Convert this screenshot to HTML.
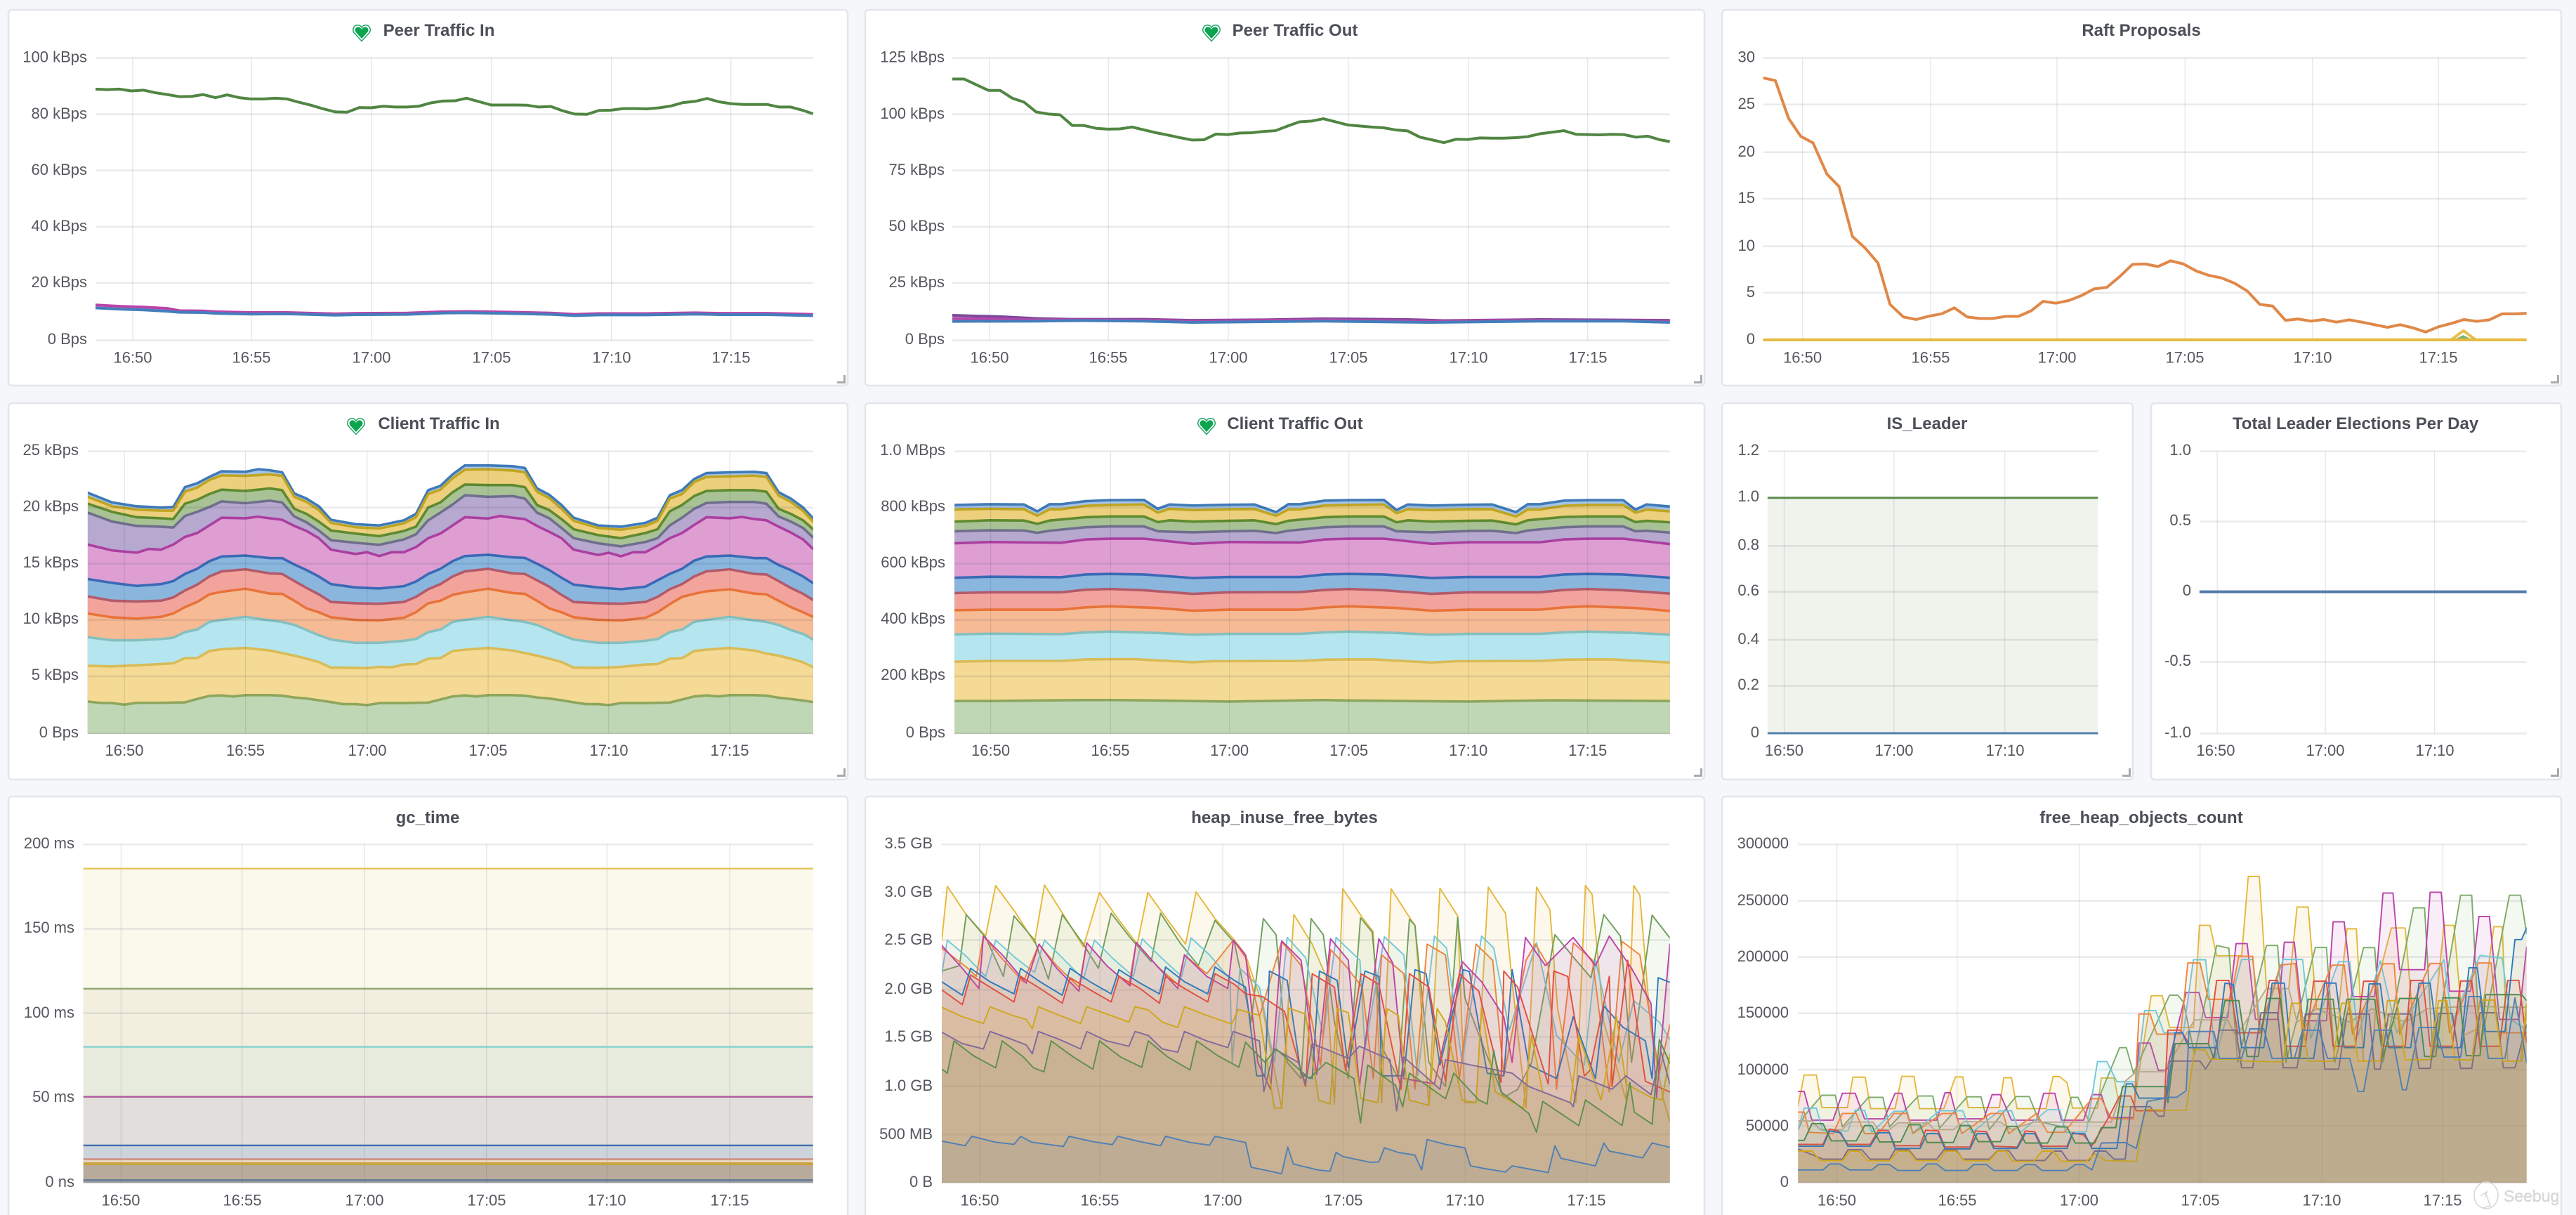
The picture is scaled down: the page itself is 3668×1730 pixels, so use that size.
<!DOCTYPE html>
<html><head><meta charset="utf-8"><title>Dashboard</title>
<style>
html,body{margin:0;padding:0;background:#f6f7fa;width:3668px;height:1730px;overflow:hidden}
svg{display:block;font-family:"Liberation Sans",sans-serif}
svg *{vector-effect:non-scaling-stroke}
.p{fill:#fff;stroke:#e2e6ec;stroke-width:2.5}
.t{font-size:24px;font-weight:700;fill:#4c4f57;text-anchor:middle}
.y text{font-size:22px;fill:#55575e;text-anchor:end}
.x text{font-size:22px;fill:#55575e;text-anchor:middle}
.gh{fill:none;stroke:rgba(40,50,80,.1);stroke-width:2.5}
.gv{fill:none;stroke:rgba(40,50,80,.12);stroke-width:1.3}
.l{fill:none;stroke-width:4;stroke-linejoin:round}
.s polygon{stroke-width:3.6;stroke-linejoin:round}
.h polygon{fill-opacity:.095;stroke-width:1.9;stroke-linejoin:round}
.r{fill:none;stroke:#a9aaad;stroke-width:3}
</style></head><body>
<svg xmlns="http://www.w3.org/2000/svg" width="3668" height="1730" viewBox="0 0 3668 1730">
<defs>
<clipPath id="c4"><rect x="158" y="100" width="1306" height="1206"/></clipPath>
<clipPath id="c5"><rect x="176" y="100" width="1288" height="1206"/></clipPath>
<clipPath id="c9"><rect x="153" y="100" width="1311" height="1348"/></clipPath>
<clipPath id="c10"><rect x="165" y="100" width="1314" height="1348"/></clipPath>
</defs>
<rect width="3668" height="1730" fill="#f6f7fa"/>

<rect class="p" x="12" y="14" width="1195" height="535" rx="5"/>
<rect class="p" x="1232" y="14" width="1195" height="535" rx="5"/>
<rect class="p" x="2452" y="14" width="1195" height="535" rx="5"/>
<rect class="p" x="12" y="574" width="1195" height="536" rx="5"/>
<rect class="p" x="1232" y="574" width="1195" height="536" rx="5"/>
<rect class="p" x="2452" y="574" width="585" height="536" rx="5"/>
<rect class="p" x="3063" y="574" width="584" height="536" rx="5"/>
<rect class="p" x="12" y="1134" width="1195" height="640" rx="5"/>
<rect class="p" x="1232" y="1134" width="1195" height="640" rx="5"/>
<rect class="p" x="2452" y="1134" width="1195" height="640" rx="5"/>

<path class="r" d="M1202.5 534V544.500H1192M2422.500 534V544.500H2412M3642.500 534V544.500H3632M1202.500 1094V1104.500H1192M2422.500 1094V1104.500H2412M3032.500 1094V1104.500H3022M3642.500 1094V1104.500H3632"/>

<!-- P1 -->
<g transform="scale(.7908,.3699)">
<path class="gh" d="M172 223H1464M172 440H1464M172 656H1464M172 873H1464M172 1089H1464M172 1310H1464"/>
<path class="gv" d="M239 223V1310M453 223V1310M669 223V1310M885 223V1310M1101 223V1310M1316 223V1310"/>
<polyline class="l" stroke="#508642" points="172,343 193,345 215,343 237,350 258,347 280,357 301,364 323,372 345,371 366,364 388,376 409,365 431,376 452,381 474,381 496,378 517,381 539,394 560,405 582,419 604,431 625,432 647,414 668,415 690,409 711,412 733,412 754,409 776,396 797,389 819,388 840,378 862,391 884,404 905,404 927,404 949,405 970,412 992,410 1014,427 1035,439 1057,440 1079,425 1100,424 1122,418 1143,418 1165,419 1187,415 1208,408 1230,395 1252,390 1273,379 1295,392 1316,399 1338,402 1359,402 1381,402 1403,412 1424,412 1446,425 1464,438"/>
<polyline class="l" stroke="#ba43a9" points="172,1174 215,1179 258,1182 301,1187 323,1196 366,1197 388,1200 452,1203 517,1203 604,1208 647,1206 733,1205 797,1200 840,1199 905,1201 992,1205 1035,1210 1079,1207 1165,1207 1252,1204 1295,1206 1381,1206 1464,1210"/>
<polyline class="l" stroke="#447ebc" points="172,1185 215,1190 258,1193 301,1198 323,1202 366,1203 388,1206 452,1209 517,1208 604,1213 647,1211 733,1210 797,1205 840,1204 905,1206 992,1210 1035,1215 1079,1212 1165,1212 1252,1209 1295,1211 1381,1211 1464,1215"/>
</g>
<!-- P2 -->
<g transform="translate(1220,0) scale(.7908,.3699)">
<path class="gh" d="M172 223H1464M172 440H1464M172 656H1464M172 873H1464M172 1089H1464M172 1310H1464"/>
<path class="gv" d="M239 223V1310M453 223V1310M669 223V1310M885 223V1310M1101 223V1310M1316 223V1310"/>
<polyline class="l" stroke="#508642" points="172,304 193,304 215,326 237,348 258,348 280,378 301,393 323,431 345,439 366,442 388,483 409,483 431,494 452,497 474,496 496,489 517,500 539,511 560,520 582,530 604,539 625,538 647,516 668,518 690,512 711,511 733,506 754,503 776,485 797,469 819,466 840,457 862,469 884,481 905,485 927,489 949,492 970,500 992,504 1014,528 1035,538 1057,549 1079,536 1100,537 1122,531 1143,532 1165,532 1187,530 1208,526 1230,515 1252,509 1273,503 1295,517 1316,518 1338,519 1359,517 1381,518 1403,528 1424,524 1446,538 1464,545"/>
<polyline class="l" stroke="#7a4a9a" points="172,1214 258,1219 323,1226 388,1229 517,1229 604,1233 733,1231 840,1227 992,1230 1057,1234 1230,1230 1464,1233"/>
<polyline class="l" stroke="#ba43a9" points="172,1226 258,1228 323,1231 517,1232 604,1236 840,1231 1035,1236 1230,1233 1464,1236"/>
<polyline class="l" stroke="#447ebc" points="172,1237 323,1236 409,1234 517,1236 604,1241 840,1236 1035,1241 1230,1236 1381,1236 1464,1241"/>
</g>
<!-- P3 -->
<g transform="translate(2430,0) scale(.7895,.3699)">
<path class="gh" d="M102 223H1479M102 402H1479M102 586H1479M102 765H1479M102 948H1479M102 1127H1479"/>
<path class="gv" d="M173 223V1308M404 223V1308M632 223V1308M863 223V1308M1093 223V1308M1320 223V1308"/>
<polygon points="1343,1312 1385,1312 1365,1290" fill="#7eb26d"/>
<polyline class="l" stroke="#e5bf4f" points="1343,1308 1365,1273 1387,1308"/>
<polyline class="l" stroke="#e08848" points="102,300 124,310 148,456 170,525 192,550 217,670 239,718 263,910 286,955 309,1012 331,1172 355,1220 378,1230 401,1217 424,1208 447,1185 470,1220 493,1226 516,1226 539,1218 562,1218 585,1197 607,1160 630,1167 653,1157 676,1138 699,1112 722,1106 745,1065 768,1018 791,1016 814,1026 837,1004 860,1016 883,1043 906,1060 929,1070 952,1090 975,1120 998,1172 1021,1178 1044,1233 1067,1228 1090,1236 1113,1230 1136,1240 1159,1231 1182,1240 1205,1250 1228,1260 1251,1250 1274,1262 1297,1278 1320,1258 1343,1245 1366,1230 1389,1237 1412,1231 1435,1208 1458,1208 1479,1206"/>
<path class="l" stroke="#e5b83f" d="M102 1308H1479"/>
</g>
<!-- P4 -->
<g transform="translate(0,570) scale(.7908,.3635)">
<g clip-path="url(#c4)" class="s">
<polygon fill="#a5c4e6" stroke="#3f7ab8" points="158,362 202,400 246,415 290,420 312,418 333,340 355,325 377,300 399,278 442,280 465,270 486,274 508,282 530,365 552,385 574,415 596,468 640,485 683,490 727,470 749,445 771,352 793,335 815,290 837,255 879,255 923,258 945,265 967,345 989,370 1011,410 1033,460 1077,490 1118,495 1162,480 1184,460 1206,372 1228,352 1250,308 1272,285 1314,282 1358,280 1380,285 1402,360 1424,385 1446,420 1464,462 1500,462 1500,1600 100,1600 100,362"/>
<polygon fill="#ecd07e" stroke="#bfa520" points="158,378 202,415 246,428 290,432 312,432 333,358 355,342 377,312 399,294 442,296 486,290 508,296 530,378 552,398 574,430 596,480 640,497 683,502 727,482 749,458 771,367 793,350 815,305 837,272 879,270 923,275 945,282 967,358 989,383 1011,425 1033,472 1077,500 1118,507 1162,492 1184,472 1206,385 1228,367 1250,320 1272,300 1314,298 1358,295 1380,300 1402,373 1424,398 1446,433 1464,475 1500,475 1500,1600 100,1600 100,378"/>
<polygon fill="#a8c296" stroke="#5f8a2e" points="158,405 202,437 246,458 290,462 312,465 333,405 355,390 377,367 399,350 442,355 486,345 508,352 530,425 552,445 574,475 596,510 640,522 683,532 727,512 749,495 771,420 793,400 815,360 837,330 879,332 923,332 945,340 967,410 989,430 1011,465 1033,505 1077,528 1118,540 1162,520 1184,505 1206,435 1228,410 1250,375 1272,355 1314,352 1358,352 1380,358 1402,425 1424,445 1446,470 1464,505 1500,505 1500,1600 100,1600 100,405"/>
<polygon fill="#b7a8cf" stroke="#6f6f8c" points="158,440 202,475 246,492 290,495 312,498 333,453 355,437 377,418 399,396 442,403 486,393 508,400 530,455 552,478 574,510 596,548 640,558 683,566 727,545 749,525 771,470 793,440 815,408 837,372 879,378 923,375 945,385 967,440 989,462 1011,500 1033,540 1077,560 1118,572 1162,555 1184,540 1206,490 1228,460 1250,425 1272,402 1314,398 1358,398 1380,405 1402,455 1424,475 1446,500 1464,537 1500,537 1500,1600 100,1600 100,440"/>
<polygon fill="#de9ed2" stroke="#ab3fa0" points="158,565 202,588 246,597 268,582 290,585 312,565 333,535 355,520 377,490 399,460 442,462 464,456 486,462 508,468 530,492 552,512 574,540 596,585 640,602 661,595 683,610 705,595 727,595 749,575 771,540 793,522 815,490 837,458 879,463 901,453 923,460 945,465 967,492 989,515 1011,540 1033,585 1077,606 1096,597 1118,611 1140,595 1162,595 1184,570 1206,540 1228,520 1250,488 1272,458 1314,462 1336,457 1358,465 1380,470 1402,495 1424,518 1446,545 1464,582 1500,582 1500,1600 100,1600 100,565"/>
<polygon fill="#8ab6de" stroke="#3a6ab5" points="158,700 202,715 246,727 290,720 312,708 333,680 355,660 377,630 399,612 442,608 486,618 508,618 530,643 552,665 574,690 596,720 640,733 683,737 727,728 749,710 771,680 793,660 815,630 837,610 879,605 923,615 945,617 967,640 989,665 1011,695 1033,722 1077,733 1118,740 1162,730 1184,705 1206,680 1228,660 1250,628 1272,612 1314,608 1358,618 1380,618 1402,645 1424,665 1446,690 1464,716 1500,716 1500,1600 100,1600 100,700"/>
<polygon fill="#f2a49c" stroke="#b35a6a" points="158,768 202,785 246,788 290,785 312,772 333,745 355,722 377,690 399,670 442,662 486,678 508,680 530,708 552,735 574,760 596,790 640,795 683,797 727,790 749,770 771,740 793,720 815,690 837,670 879,660 923,678 945,680 967,705 989,730 1011,762 1033,790 1077,795 1118,797 1162,790 1184,770 1206,740 1228,720 1250,690 1272,670 1314,662 1358,680 1380,682 1402,708 1424,735 1446,758 1464,782 1500,782 1500,1600 100,1600 100,768"/>
<polygon fill="#f6ba94" stroke="#e8733a" points="158,835 202,850 246,855 290,848 312,835 333,810 355,790 377,760 399,750 442,738 486,757 508,758 530,785 552,815 574,830 596,850 640,860 683,862 727,852 749,830 771,795 793,785 815,762 837,752 879,738 923,755 945,758 967,785 989,815 1011,830 1033,850 1077,860 1118,862 1162,852 1184,830 1206,798 1228,770 1250,758 1272,748 1314,740 1358,757 1380,760 1402,785 1424,810 1446,830 1464,848 1500,848 1500,1600 100,1600 100,835"/>
<polygon fill="#b5e6ef" stroke="#85c0bf" points="158,928 202,940 246,940 290,935 312,930 333,908 355,898 377,868 399,860 442,848 486,862 508,868 530,880 552,900 574,920 596,937 640,950 683,950 727,942 749,935 771,908 793,898 815,868 837,860 879,848 923,862 945,868 967,880 989,900 1011,920 1033,937 1077,950 1118,950 1162,942 1184,935 1206,908 1228,898 1250,868 1272,860 1314,848 1358,862 1380,868 1402,880 1424,900 1446,915 1464,937 1500,937 1500,1600 100,1600 100,928"/>
<polygon fill="#f5da95" stroke="#d9bb58" points="158,1040 202,1042 246,1038 290,1033 312,1030 333,1010 355,1010 377,982 399,975 442,970 486,980 508,990 530,1000 552,1012 574,1025 596,1047 640,1048 661,1049 683,1044 705,1046 727,1035 749,1033 771,1012 793,1010 815,982 837,977 879,970 923,980 945,990 967,1000 989,1012 1011,1025 1033,1047 1077,1048 1118,1044 1162,1035 1184,1033 1206,1012 1228,1010 1250,982 1272,977 1314,970 1358,980 1380,992 1402,1000 1424,1012 1446,1026 1464,1045 1500,1045 1500,1600 100,1600 100,1040"/>
<polygon fill="#c0d7b5" stroke="#8ea65c" points="158,1180 180,1185 202,1186 224,1192 246,1185 290,1185 333,1183 355,1170 377,1158 399,1156 420,1160 442,1155 486,1155 508,1157 530,1164 552,1168 574,1175 596,1182 618,1190 640,1190 661,1194 683,1186 727,1186 771,1184 793,1172 815,1160 837,1156 858,1160 879,1155 923,1155 945,1157 967,1164 989,1168 1011,1175 1033,1183 1055,1190 1077,1190 1096,1194 1118,1186 1162,1186 1206,1184 1228,1172 1250,1160 1272,1156 1294,1160 1314,1155 1358,1155 1380,1157 1402,1165 1424,1170 1446,1176 1464,1182 1500,1182 1500,1600 100,1600 100,1180"/>
</g>
<path class="gh" d="M158 200H1464M158 420H1464M158 640H1464M158 860H1464M158 1081H1464M158 1305H1464"/>
<path class="gv" d="M224 200V1305M442 200V1305M661 200V1305M879 200V1305M1096 200V1305M1314 200V1305"/>
</g>
<!-- P5 -->
<g transform="translate(1220,570) scale(.7908,.3635)">
<g clip-path="url(#c5)" class="s">
<polygon fill="#a5c4e6" stroke="#3f7ab8" points="176,410 241,407 301,408 325,435 347,407 368,407 412,395 456,391 517,390 542,425 563,408 605,412 671,409 716,408 755,438 777,407 798,407 842,393 886,391 949,390 972,430 992,408 1035,412 1101,409 1144,408 1187,438 1208,407 1230,407 1273,393 1316,391 1380,391 1402,428 1422,408 1464,416 1500,416 1500,1600 100,1600 100,410"/>
<polygon fill="#ecd07e" stroke="#bfa520" points="176,428 241,425 301,427 325,452 347,427 368,427 412,413 456,410 517,408 542,440 563,425 605,430 671,427 716,426 755,452 777,428 798,427 842,412 886,410 949,408 972,442 992,427 1035,430 1101,427 1144,427 1187,455 1208,428 1230,428 1273,413 1316,410 1380,410 1402,440 1422,428 1464,435 1500,435 1500,1600 100,1600 100,428"/>
<polygon fill="#a8c296" stroke="#5f8a2e" points="176,475 241,470 301,471 325,484 347,471 412,458 456,455 517,455 542,477 563,470 605,475 671,472 716,470 755,485 777,472 842,458 886,455 949,455 972,478 992,470 1035,475 1101,472 1144,471 1187,486 1208,470 1273,457 1316,455 1380,455 1402,477 1422,472 1464,478 1500,478 1500,1600 100,1600 100,475"/>
<polygon fill="#b7a8cf" stroke="#6f6f8c" points="176,513 241,509 301,510 325,519 347,511 412,497 456,494 517,494 542,513 605,517 671,513 716,511 755,520 777,511 842,497 886,494 949,494 972,513 1035,517 1101,512 1144,511 1187,520 1208,510 1273,497 1316,494 1380,494 1402,513 1422,511 1464,518 1500,518 1500,1600 100,1600 100,513"/>
<polygon fill="#de9ed2" stroke="#ab3fa0" points="176,560 241,555 368,558 412,545 456,542 517,542 605,562 671,555 798,557 842,545 886,542 949,542 1035,562 1101,556 1230,556 1273,545 1316,542 1380,542 1464,563 1500,563 1500,1600 100,1600 100,560"/>
<polygon fill="#8ab6de" stroke="#3a6ab5" points="176,695 241,691 368,693 412,682 456,680 517,682 605,696 671,692 798,692 842,682 886,680 949,682 1035,696 1101,692 1230,692 1273,682 1316,680 1380,682 1464,695 1500,695 1500,1600 100,1600 100,695"/>
<polygon fill="#f2a49c" stroke="#b35a6a" points="176,755 241,752 368,752 412,742 456,739 517,744 605,758 671,752 798,751 842,743 886,739 949,744 1035,758 1101,752 1230,752 1273,743 1316,739 1380,744 1464,757 1500,757 1500,1600 100,1600 100,755"/>
<polygon fill="#f6ba94" stroke="#e8733a" points="176,822 241,820 368,820 412,811 456,807 540,813 605,824 671,820 798,820 842,811 886,807 970,813 1035,824 1101,820 1230,820 1273,811 1316,807 1400,813 1464,825 1500,825 1500,1600 100,1600 100,822"/>
<polygon fill="#b5e6ef" stroke="#85c0bf" points="176,917 241,914 368,916 412,909 456,906 540,911 605,918 671,915 798,915 842,909 886,906 970,911 1035,918 1101,915 1230,915 1273,909 1316,906 1400,911 1464,918 1500,918 1500,1600 100,1600 100,917"/>
<polygon fill="#f5da95" stroke="#d9bb58" points="176,1024 241,1021 368,1021 412,1015 456,1014 500,1014 605,1026 640,1022 800,1021 842,1016 886,1015 930,1015 1035,1027 1080,1022 1230,1021 1273,1016 1316,1015 1360,1015 1464,1027 1500,1027 1500,1600 100,1600 100,1024"/>
<polygon fill="#c0d7b5" stroke="#8ea65c" points="176,1178 241,1178 412,1174 456,1174 540,1176 671,1180 842,1174 886,1176 1101,1180 1250,1175 1300,1176 1464,1178 1500,1178 1500,1600 100,1600 100,1178"/>
</g>
<path class="gh" d="M176 200H1464M176 420H1464M176 640H1464M176 860H1464M176 1081H1464M176 1305H1464"/>
<path class="gv" d="M241 200V1305M457 200V1305M671 200V1305M886 200V1305M1101 200V1305M1316 200V1305"/>
</g>
<!-- P6 -->
<g transform="translate(2430,570) scale(.7895,.3635)">
<rect x="110" y="382" width="596" height="923" fill="#eff3ec"/>
<path class="gh" d="M110 200H706M110 570H706M110 750H706M110 938H706M110 1119H706"/>
<path class="gv" d="M140 200V1305M338 200V1305M538 200V1305"/>
<path class="l" style="stroke-width:3" stroke="#5b8a4a" d="M110 382H706"/>
<path class="l" style="stroke-width:3" stroke="#5380ac" d="M110 1304H706"/>
</g>
<!-- P7 -->
<g transform="translate(2430,570) scale(.7895,.3635)">
<path class="gh" d="M889 200H1479M889 475H1479M889 1025H1479M889 1305H1479"/>
<path class="gv" d="M921 200V1305M1116 200V1305M1313 200V1305"/>
<path class="l" stroke="#4f7ba8" d="M889 750H1479"/>
</g>
<!-- P8 -->
<g transform="translate(0,1130) scale(.7908,.3827)">
<rect x="150" y="279" width="1314" height="447" fill="#fbf8ec"/>
<rect x="150" y="726" width="1314" height="216" fill="#f2efdf"/>
<rect x="150" y="942" width="1314" height="186" fill="#e6ebde"/>
<rect x="150" y="1128" width="1314" height="181" fill="#e1dedb"/>
<rect x="150" y="1309" width="1314" height="51" fill="#cdd3db"/>
<rect x="150" y="1360" width="1314" height="17" fill="#e8d5c5"/>
<rect x="150" y="1377" width="1314" height="61" fill="#b9ab9c"/>
<rect x="150" y="1438" width="1314" height="11" fill="#a9a9ab"/>
<path class="gh" d="M150 189H1464M150 503H1464M150 817H1464M150 1445H1464"/>
<path class="gv" d="M218 189V1449M436 189V1449M656 189V1449M876 189V1449M1093 189V1449M1314 189V1449"/>
<g class="l" style="stroke-width:2.4">
<path stroke="#e5c158" d="M150 279H1464"/>
<path stroke="#8fa66f" d="M150 726H1464"/>
<path stroke="#86d3cd" d="M150 942H1464"/>
<path stroke="#b0599f" d="M150 1128H1464"/>
<path stroke="#3f6fb0" d="M150 1309H1464"/>
<path stroke="#cc8a7a" d="M150 1360H1464"/>
<path stroke="#c9a33f" style="stroke-width:4" d="M150 1377H1464"/>
<path stroke="#5f7a96" d="M150 1438H1464"/>
</g>
</g>
<!-- P9 -->
<g transform="translate(1220,1130) scale(.7908,.3827)">
<path class="gh" d="M153 189H1464M153 368H1464M153 545H1464M153 730H1464M153 905H1464M153 1088H1464M153 1268H1464M153 1447H1464"/>
<path class="gv" d="M221 189V1447M438 189V1447M659 189V1447M876 189V1447M1095 189V1447M1314 189V1447"/>
<g clip-path="url(#c9)" class="h">
<polygon fill="#eab839" stroke="#e5b83b" points="153,545 163,345 197,450 232,530 250,342 285,440 320,555 338,340 372,450 408,570 437,368 470,465 505,560 524,368 558,465 592,560 611,366 645,465 680,545 700,600 728,770 765,1170 787,450 820,560 845,680 860,1155 875,354 910,460 930,515 945,1150 962,354 995,460 1005,490 1030,1160 1050,352 1082,455 1095,1150 1115,1150 1137,348 1168,445 1180,700 1205,1170 1224,348 1248,432 1262,800 1295,1150 1312,342 1324,375 1345,850 1385,1140 1399,342 1410,378 1430,880 1452,1135 1464,1220 1500,1220 1500,1600 100,1600 100,545"/>
<polygon fill="#7eb26d" stroke="#6f9e5c" points="153,660 185,640 197,450 232,535 264,680 283,455 320,545 345,690 370,450 408,560 435,650 458,445 490,530 530,625 547,445 582,555 615,640 645,472 680,555 710,850 732,465 755,525 775,1000 800,1060 818,465 840,525 860,850 885,1060 907,462 928,515 947,950 975,1060 995,468 1005,490 1030,1000 1060,1090 1082,460 1095,760 1130,950 1165,1130 1190,1100 1215,1000 1257,525 1295,620 1322,685 1345,450 1375,530 1395,1000 1432,452 1464,537 1500,537 1500,1600 100,1600 100,660"/>
<polygon fill="#6ed0e0" stroke="#72c8d8" points="153,670 163,545 197,605 232,680 250,545 285,610 320,665 338,545 372,615 408,690 428,545 462,615 498,680 514,540 548,610 585,680 602,537 635,600 672,690 676,1000 690,650 725,720 752,1000 775,535 808,610 840,900 863,535 906,620 915,950 950,533 985,600 1010,1050 1040,530 1062,575 1090,1000 1125,530 1147,575 1175,880 1224,555 1260,900 1310,1010 1330,620 1372,1000 1399,770 1445,850 1464,915 1500,915 1500,1600 100,1600 100,670"/>
<polygon fill="#ef843c" stroke="#ef843c" points="153,575 200,650 215,680 228,530 262,615 300,700 328,560 360,640 400,720 414,555 450,640 490,710 503,555 540,640 578,710 590,600 630,670 678,545 700,610 725,830 765,550 800,640 835,1010 853,580 880,640 910,720 930,1060 945,600 985,670 1005,1100 1027,560 1060,600 1085,1060 1115,560 1145,620 1165,1050 1205,620 1222,560 1245,640 1260,1100 1290,555 1325,620 1355,1110 1378,550 1410,600 1445,1040 1464,860 1500,860 1500,1600 100,1600 100,575"/>
<polygon fill="#ba43a9" stroke="#ba43a9" points="153,565 190,650 220,725 228,530 262,600 305,705 328,560 360,650 400,735 414,555 450,640 492,715 503,553 540,640 578,725 590,600 630,680 668,725 678,545 700,600 722,1000 745,1100 765,548 800,620 828,1045 853,540 885,620 905,1090 940,540 965,630 985,1060 1040,1080 1090,625 1125,700 1165,830 1180,1000 1204,535 1240,640 1290,535 1330,640 1355,530 1395,650 1430,780 1440,1130 1464,560 1500,560 1500,1600 100,1600 100,565"/>
<polygon fill="#b09060" stroke="#2f79be" points="153,700 190,750 205,650 240,700 283,745 295,650 330,700 370,750 384,650 420,700 458,745 472,655 510,705 545,745 556,645 590,700 632,745 645,645 680,695 700,720 720,1050 735,1050 743,660 775,695 800,1045 820,1060 833,660 865,695 885,1020 915,660 940,680 945,1050 985,1050 1005,655 1025,670 1050,1010 1092,655 1103,662 1135,1040 1165,1050 1180,655 1210,1010 1260,1060 1290,830 1330,1060 1345,790 1380,870 1420,920 1432,1060 1443,685 1464,702 1500,702 1500,1600 100,1600 100,700"/>
<polygon fill="#e24d42" stroke="#e24d42" points="153,730 190,785 205,675 240,720 283,775 295,680 330,725 370,780 384,685 420,730 458,775 472,680 510,725 545,780 556,680 590,725 632,775 645,670 680,710 700,745 730,755 770,810 808,1090 820,670 860,720 880,1030 908,670 940,710 980,1100 995,670 1030,720 1060,1070 1085,670 1120,735 1160,1075 1165,660 1190,720 1245,1080 1255,660 1280,680 1310,1050 1320,1030 1355,680 1360,1090 1388,620 1420,1070 1464,1110 1500,1110 1500,1600 100,1600 100,730"/>
<polygon fill="#cca300" stroke="#cfa71a" points="153,795 190,830 228,855 240,793 280,825 305,840 316,875 327,793 365,825 403,855 414,793 450,820 490,850 501,793 525,805 550,850 578,870 590,793 630,825 675,857 687,803 725,825 752,1170 765,1170 778,798 808,820 832,1140 852,1155 865,800 885,815 908,1135 938,1150 955,800 975,825 995,1140 1030,1160 1045,800 1060,850 1090,1140 1115,1150 1125,800 1150,1110 1200,1170 1215,900 1235,1110 1285,1150 1300,900 1340,1140 1368,830 1385,1080 1430,1130 1450,1140 1464,970 1500,970 1500,1600 100,1600 100,795"/>
<polygon fill="#9a8060" stroke="#806a9c" points="153,888 190,930 228,950 240,885 280,915 305,935 316,968 327,885 365,915 403,950 414,885 450,920 490,940 501,885 525,900 550,950 578,962 590,885 630,920 668,945 678,885 725,920 733,1108 752,950 795,1000 808,1080 820,930 885,985 905,940 960,990 972,1180 985,980 1050,1100 1060,990 1130,1020 1180,1040 1210,1090 1285,1150 1290,1165 1300,1050 1360,1100 1385,1050 1430,1120 1448,960 1464,1080 1500,1080 1500,1600 100,1600 100,888"/>
<polygon fill="#6a8042" stroke="#5f8f4c" points="153,1025 163,1040 175,920 210,975 250,1020 262,920 300,980 318,1020 337,1035 350,920 390,980 425,1025 437,920 475,980 513,1018 525,920 560,980 600,1028 612,920 650,975 688,1018 700,925 735,1000 755,950 815,1060 845,1000 895,1060 907,1225 920,1010 970,1085 983,1165 995,1040 1060,1135 1075,1040 1120,1140 1135,1155 1147,955 1160,1110 1210,1190 1224,1260 1235,1145 1300,1235 1312,1140 1378,1235 1392,1075 1400,1185 1432,1230 1445,915 1464,1003 1500,1003 1500,1600 100,1600 100,1025"/>
<polygon fill="#5c7ea0" stroke="#4f80b5" points="153,1293 195,1310 207,1275 250,1297 283,1305 295,1275 315,1297 372,1313 382,1275 425,1295 460,1306 470,1275 510,1295 547,1310 556,1275 600,1298 635,1308 645,1275 700,1298 710,1390 765,1414 776,1315 786,1378 830,1400 852,1405 863,1335 875,1350 925,1372 940,1370 950,1318 975,1335 1005,1345 1017,1400 1027,1287 1060,1305 1095,1318 1105,1385 1130,1395 1168,1408 1180,1385 1245,1410 1257,1310 1268,1357 1330,1385 1345,1300 1355,1330 1415,1355 1432,1300 1464,1316 1500,1316 1500,1600 100,1600 100,1293"/>
</g>
</g>
<!-- P10 -->
<g transform="translate(2430,1130) scale(.7895,.3827)">
<path class="gh" d="M165 189H1479M165 399H1479M165 608H1479M165 817H1479M165 1027H1479M165 1237H1479M165 1447H1479"/>
<path class="gv" d="M235 189V1447M452 189V1447M672 189V1447M890 189V1447M1110 189V1447M1328 189V1447"/>
<g clip-path="url(#c10)" class="h">
<polygon fill="#eab839" stroke="#e5b83b" points="165,1160 176,1047 198,1047 208,1168 254,1168 264,1055 286,1055 296,1172 340,1172 352,1052 374,1052 384,1172 428,1172 449,1054 462,1054 472,1168 528,1168 536,1057 550,1057 560,1172 612,1172 625,1053 637,1053 650,1075 660,1170 705,1170 712,1058 735,1058 745,1165 770,1165 802,752 822,752 835,870 878,870 889,490 908,490 920,603 965,603 977,308 997,308 1010,725 1050,725 1065,422 1085,422 1100,800 1140,800 1155,503 1172,503 1185,995 1200,995 1210,700 1235,500 1260,500 1280,990 1305,990 1330,490 1348,490 1365,900 1395,870 1420,495 1435,495 1445,995 1470,995 1479,810 1500,810 1500,1600 100,1600 100,1160"/>
<polygon fill="#7eb26d" stroke="#7eaa6a" points="165,1250 176,1200 208,1122 232,1122 245,1240 292,1130 318,1130 330,1240 382,1125 408,1125 420,1245 470,1128 495,1128 510,1250 558,1127 582,1127 600,1220 642,1240 658,1130 670,1130 690,1220 745,945 757,945 770,1040 835,750 850,750 860,775 880,970 920,565 942,575 958,1000 1010,565 1030,565 1045,1000 1098,572 1118,572 1133,1000 1185,573 1205,573 1220,1000 1275,425 1295,425 1310,980 1360,378 1380,378 1395,950 1448,378 1468,378 1479,520 1500,520 1500,1600 100,1600 100,1250"/>
<polygon fill="#ba43a9" stroke="#ba43a9" points="165,1108 176,1108 190,1215 228,1215 245,1115 268,1115 285,1210 320,1210 340,1115 352,1115 365,1215 415,1215 430,1113 440,1113 452,1210 500,1210 515,1120 530,1120 550,1215 595,1215 608,1115 628,1115 640,1215 680,1215 695,1120 712,1120 725,1205 770,1205 780,928 800,928 815,1030 830,1028 865,740 888,740 900,833 940,833 955,558 975,558 990,840 1030,840 1042,553 1060,553 1075,845 1118,845 1130,477 1150,477 1165,755 1205,755 1220,370 1238,370 1250,655 1295,655 1305,367 1325,367 1340,735 1378,735 1393,457 1412,457 1430,840 1465,840 1479,572 1500,572 1500,1600 100,1600 100,1108"/>
<polygon fill="#6ed0e0" stroke="#72c8d8" points="165,1250 176,1170 198,1170 210,1255 255,1255 268,1178 285,1178 298,1260 338,1182 362,1182 372,1262 420,1180 462,1180 478,1262 528,1180 550,1180 565,1262 615,1176 637,1176 648,1260 685,1258 705,997 722,997 740,1072 775,1072 790,807 810,807 825,890 860,890 878,618 900,618 918,985 965,617 985,617 1000,880 1040,617 1075,617 1090,910 1140,625 1160,625 1175,900 1215,622 1245,890 1330,618 1345,850 1395,602 1435,612 1450,840 1479,880 1500,880 1500,1600 100,1600 100,1250"/>
<polygon fill="#ef843c" stroke="#ef843c" points="165,1185 176,1185 185,1260 228,1265 245,1190 270,1190 285,1265 310,1265 338,1190 362,1190 372,1265 425,1190 450,1190 460,1265 512,1190 535,1190 545,1265 595,1190 615,1260 645,1260 695,1135 712,1135 730,1210 770,1210 780,820 800,820 812,895 855,895 868,630 890,630 905,765 945,765 960,605 985,605 997,890 1035,638 1062,632 1075,895 1128,638 1150,638 1165,895 1220,633 1240,633 1250,895 1305,632 1325,632 1340,890 1392,630 1415,630 1428,890 1479,890 1500,890 1500,1600 100,1600 100,1185"/>
<polygon fill="#b7a98e" stroke="#b7a98e" points="165,1218 190,1218 205,1250 245,1250 258,1222 300,1222 310,1250 330,1250 345,1225 400,1225 410,1250 445,1250 465,1220 530,1222 550,1250 590,1222 730,1222 755,1070 775,1035 825,1035 880,842 940,842 955,905 1010,725 1050,725 1065,850 1100,800 1160,850 1200,800 1260,850 1300,800 1380,790 1440,795 1479,795 1500,795 1500,1600 100,1600 100,1218"/>
<polygon fill="#e24d42" stroke="#e24d42" points="165,1305 210,1305 222,1248 238,1255 255,1305 295,1305 310,1252 328,1255 340,1310 385,1310 395,1252 418,1255 430,1315 475,1315 485,1255 505,1258 518,1312 560,1315 575,1255 592,1258 605,1312 650,1312 660,1262 680,1270 695,1310 725,1205 745,1125 765,1125 775,1180 825,1180 832,880 855,880 870,930 905,930 920,695 942,695 958,890 1000,890 1015,695 1030,695 1045,940 1080,940 1095,698 1118,698 1130,940 1170,940 1185,698 1205,698 1220,940 1260,940 1270,695 1292,695 1305,940 1345,940 1360,697 1380,697 1395,940 1430,940 1445,695 1465,695 1479,925 1500,925 1500,1600 100,1600 100,1305"/>
<polygon fill="#b09060" stroke="#2f79be" points="165,1312 210,1312 222,1255 242,1262 255,1312 295,1312 310,1262 330,1262 340,1320 385,1320 398,1265 418,1265 430,1322 475,1322 488,1265 505,1265 518,1320 560,1320 575,1265 592,1265 605,1320 650,1320 660,1265 682,1265 695,1320 740,1320 757,1080 768,1080 780,1133 830,1133 845,890 858,890 870,945 920,945 935,705 950,710 965,945 1005,945 1020,705 1042,705 1055,985 1095,985 1115,705 1135,705 1150,945 1185,945 1195,708 1215,708 1230,945 1270,945 1285,705 1305,705 1320,945 1360,945 1375,648 1390,648 1405,885 1440,885 1458,543 1470,543 1479,500 1500,500 1500,1600 100,1600 100,1312"/>
<polygon fill="#6a8042" stroke="#4f8a50" points="165,1290 176,1290 190,1228 210,1228 225,1292 270,1292 285,1235 298,1235 312,1296 350,1296 365,1232 385,1232 398,1298 445,1298 458,1235 475,1235 490,1295 530,1295 542,1238 560,1238 575,1300 615,1300 630,1240 650,1240 665,1300 700,1300 712,1243 738,1243 750,1090 765,1090 800,1090 828,1090 832,1150 845,930 905,930 915,985 935,770 960,770 975,978 995,978 1010,762 1035,762 1048,983 1070,983 1085,765 1130,765 1140,940 1155,765 1205,765 1220,980 1250,762 1283,762 1295,978 1315,978 1328,760 1358,760 1370,975 1395,975 1405,748 1470,748 1479,770 1500,770 1500,1600 100,1600 100,1290"/>
<polygon fill="#9a8060" stroke="#7a6a8c" points="165,1322 210,1360 245,1360 255,1325 280,1325 295,1360 330,1360 340,1325 365,1325 378,1360 415,1360 428,1325 450,1325 462,1360 510,1360 525,1328 545,1328 558,1365 610,1365 625,1330 640,1330 652,1365 690,1365 700,1330 720,1330 735,1360 755,1360 765,1165 800,1165 815,1200 825,1200 835,995 890,995 900,1025 915,975 925,880 955,880 965,1020 985,1020 1000,815 1030,815 1040,1020 1065,1020 1080,820 1105,820 1115,1025 1140,1025 1155,820 1195,820 1205,1025 1215,1025 1230,820 1270,820 1285,1022 1305,1022 1320,818 1345,818 1360,1022 1380,1022 1395,815 1425,815 1437,1020 1458,1020 1479,860 1500,860 1500,1600 100,1600 100,1322"/>
<polygon fill="#cca300" stroke="#cfa71a" points="165,1330 190,1330 205,1365 245,1365 258,1330 275,1330 290,1365 330,1365 345,1330 365,1330 378,1365 420,1365 430,1330 450,1330 465,1365 510,1365 525,1330 540,1330 552,1368 590,1368 605,1330 625,1330 640,1368 685,1368 700,1340 720,1365 775,1368 790,1175 825,1178 865,1178 880,950 900,955 908,988 960,988 970,995 1040,998 1055,780 1070,780 1085,995 1130,995 1145,780 1160,780 1175,995 1215,995 1228,770 1245,770 1260,990 1305,990 1320,770 1335,770 1350,990 1380,990 1395,768 1420,768 1435,995 1468,995 1479,780 1500,780 1500,1600 100,1600 100,1330"/>
<polygon fill="#5c7ea0" stroke="#4f80b5" points="165,1400 210,1400 222,1378 240,1378 258,1400 298,1400 310,1380 330,1380 345,1402 385,1402 398,1378 415,1378 430,1402 470,1402 482,1380 505,1380 518,1402 560,1402 575,1380 592,1380 605,1402 650,1402 665,1380 680,1380 695,1400 712,1300 755,1298 775,1320 795,1145 835,1130 848,1130 865,1105 870,885 915,885 925,985 965,985 980,875 1005,875 1020,985 1060,985 1075,880 1105,880 1120,985 1160,985 1175,1108 1185,1108 1205,880 1235,880 1255,1102 1262,1102 1285,870 1315,870 1330,980 1360,980 1375,755 1395,755 1410,985 1440,985 1458,760 1479,1000 1500,1000 1500,1600 100,1600 100,1400"/>
</g>
</g>

<!-- hearts -->
<g id="hearts" fill="#fff" stroke="#25a56a" stroke-width="1.500">
<g transform="translate(502,35)"><path d="M13 23.500L2.500 12C-1.500 7 2 .8 7.200 .8C10 .8 12 2.300 13 4.300C14 2.300 16 .8 18.800 .8C24 .8 27.500 7 23.500 12Z"/><path fill="#0ba44f" stroke="none" d="M13 20L4.800 11C2 7.500 4.500 3.400 7.800 3.400C10.200 3.400 12 5 13 7.200C14 5 15.800 3.400 18.200 3.400C21.500 3.400 24 7.500 21.200 11Z"/></g>
<g transform="translate(1712,35)"><path d="M13 23.500L2.500 12C-1.500 7 2 .8 7.200 .8C10 .8 12 2.300 13 4.300C14 2.300 16 .8 18.800 .8C24 .8 27.500 7 23.500 12Z"/><path fill="#0ba44f" stroke="none" d="M13 20L4.800 11C2 7.500 4.500 3.400 7.800 3.400C10.200 3.400 12 5 13 7.200C14 5 15.800 3.400 18.200 3.400C21.500 3.400 24 7.500 21.200 11Z"/></g>
<g transform="translate(494,595)"><path d="M13 23.500L2.500 12C-1.500 7 2 .8 7.200 .8C10 .8 12 2.300 13 4.300C14 2.300 16 .8 18.800 .8C24 .8 27.500 7 23.500 12Z"/><path fill="#0ba44f" stroke="none" d="M13 20L4.800 11C2 7.500 4.500 3.400 7.800 3.400C10.200 3.400 12 5 13 7.200C14 5 15.800 3.400 18.200 3.400C21.500 3.400 24 7.500 21.200 11Z"/></g>
<g transform="translate(1705,595)"><path d="M13 23.500L2.500 12C-1.500 7 2 .8 7.200 .8C10 .8 12 2.300 13 4.300C14 2.300 16 .8 18.800 .8C24 .8 27.500 7 23.500 12Z"/><path fill="#0ba44f" stroke="none" d="M13 20L4.800 11C2 7.500 4.500 3.400 7.800 3.400C10.200 3.400 12 5 13 7.200C14 5 15.800 3.400 18.200 3.400C21.500 3.400 24 7.500 21.200 11Z"/></g>
</g>

<!-- titles -->
<text class="t" x="625" y="51">Peer Traffic In</text>
<text class="t" x="1844" y="51">Peer Traffic Out</text>
<text class="t" x="3049" y="51">Raft Proposals</text>
<text class="t" x="625" y="611">Client Traffic In</text>
<text class="t" x="1844" y="611">Client Traffic Out</text>
<text class="t" x="2744" y="611">IS_Leader</text>
<text class="t" x="3354" y="611">Total Leader Elections Per Day</text>
<text class="t" x="609" y="1172">gc_time</text>
<text class="t" x="1829" y="1172">heap_inuse_free_bytes</text>
<text class="t" x="3049" y="1172">free_heap_objects_count</text>

<!-- y labels -->
<g class="y">
<text x="124" y="88.500">100 kBps</text><text x="124" y="169">80 kBps</text><text x="124" y="249">60 kBps</text><text x="124" y="329">40 kBps</text><text x="124" y="409">20 kBps</text><text x="124" y="490">0 Bps</text>
<text x="1345" y="88.500">125 kBps</text><text x="1345" y="169">100 kBps</text><text x="1345" y="249">75 kBps</text><text x="1345" y="329">50 kBps</text><text x="1345" y="409">25 kBps</text><text x="1345" y="490">0 Bps</text>
<text x="2499" y="88.500">30</text><text x="2499" y="155">25</text><text x="2499" y="223">20</text><text x="2499" y="289">15</text><text x="2499" y="357">10</text><text x="2499" y="423">5</text><text x="2499" y="490">0</text>
<text x="112" y="648">25 kBps</text><text x="112" y="728">20 kBps</text><text x="112" y="808">15 kBps</text><text x="112" y="888">10 kBps</text><text x="112" y="968">5 kBps</text><text x="112" y="1050">0 Bps</text>
<text x="1346" y="648">1.0 MBps</text><text x="1346" y="728">800 kBps</text><text x="1346" y="808">600 kBps</text><text x="1346" y="888">400 kBps</text><text x="1346" y="968">200 kBps</text><text x="1346" y="1050">0 Bps</text>
<text x="2505" y="648">1.2</text><text x="2505" y="714">1.0</text><text x="2505" y="783">0.8</text><text x="2505" y="848">0.6</text><text x="2505" y="917">0.4</text><text x="2505" y="982">0.2</text><text x="2505" y="1050">0</text>
<text x="3120" y="648">1.0</text><text x="3120" y="748">0.5</text><text x="3120" y="848">0</text><text x="3120" y="948">-0.5</text><text x="3120" y="1050">-1.0</text>
<text x="106" y="1208">200 ms</text><text x="106" y="1328">150 ms</text><text x="106" y="1449">100 ms</text><text x="106" y="1569">50 ms</text><text x="106" y="1690">0 ns</text>
<text x="1328" y="1208">3.5 GB</text><text x="1328" y="1277">3.0 GB</text><text x="1328" y="1345">2.5 GB</text><text x="1328" y="1415">2.0 GB</text><text x="1328" y="1483">1.5 GB</text><text x="1328" y="1553">1.0 GB</text><text x="1328" y="1622">500 MB</text><text x="1328" y="1690">0 B</text>
<text x="2547" y="1208">300000</text><text x="2547" y="1289">250000</text><text x="2547" y="1369">200000</text><text x="2547" y="1449">150000</text><text x="2547" y="1530">100000</text><text x="2547" y="1610">50000</text><text x="2547" y="1690">0</text>
</g>

<!-- x labels -->
<g class="x">
<text x="189" y="516.500">16:50</text><text x="358" y="516.500">16:55</text><text x="529" y="516.500">17:00</text><text x="700" y="516.500">17:05</text><text x="871" y="516.500">17:10</text><text x="1041" y="516.500">17:15</text>
<text x="1409" y="516.500">16:50</text><text x="1578" y="516.500">16:55</text><text x="1749" y="516.500">17:00</text><text x="1920" y="516.500">17:05</text><text x="2091" y="516.500">17:10</text><text x="2261" y="516.500">17:15</text>
<text x="2566.600" y="516.500">16:50</text><text x="2749" y="516.500">16:55</text><text x="2929" y="516.500">17:00</text><text x="3111" y="516.500">17:05</text><text x="3293" y="516.500">17:10</text><text x="3472" y="516.500">17:15</text>
<text x="177" y="1076">16:50</text><text x="349.500" y="1076">16:55</text><text x="523" y="1076">17:00</text><text x="695" y="1076">17:05</text><text x="867" y="1076">17:10</text><text x="1039" y="1076">17:15</text>
<text x="1410.600" y="1076">16:50</text><text x="1581" y="1076">16:55</text><text x="1750.600" y="1076">17:00</text><text x="1920.600" y="1076">17:05</text><text x="2090.700" y="1076">17:10</text><text x="2260.700" y="1076">17:15</text>
<text x="2540.500" y="1076">16:50</text><text x="2697" y="1076">17:00</text><text x="2855" y="1076">17:10</text>
<text x="3155" y="1076">16:50</text><text x="3311" y="1076">17:00</text><text x="3467" y="1076">17:10</text>
<text x="172" y="1716.500">16:50</text><text x="345" y="1716.500">16:55</text><text x="519" y="1716.500">17:00</text><text x="693" y="1716.500">17:05</text><text x="864" y="1716.500">17:10</text><text x="1039" y="1716.500">17:15</text>
<text x="1395" y="1716.500">16:50</text><text x="1566" y="1716.500">16:55</text><text x="1741" y="1716.500">17:00</text><text x="1913" y="1716.500">17:05</text><text x="2086" y="1716.500">17:10</text><text x="2259" y="1716.500">17:15</text>
<text x="2615.500" y="1716.500">16:50</text><text x="2787" y="1716.500">16:55</text><text x="2960.500" y="1716.500">17:00</text><text x="3133" y="1716.500">17:05</text><text x="3306" y="1716.500">17:10</text><text x="3478" y="1716.500">17:15</text>
</g>

<!-- watermark -->
<g fill="none" stroke="#d6d6d6" stroke-width="1.500">
<ellipse cx="3540" cy="1702" rx="17" ry="19"/>
<path d="M3532 1703L3541 1697L3538 1705M3539 1698L3546 1717L3535 1720"/>
</g>
<text x="3565" y="1711" font-size="23" fill="#dadada" stroke="#cfcfcf" stroke-width=".4">Seebug</text>
</svg>
</body></html>
